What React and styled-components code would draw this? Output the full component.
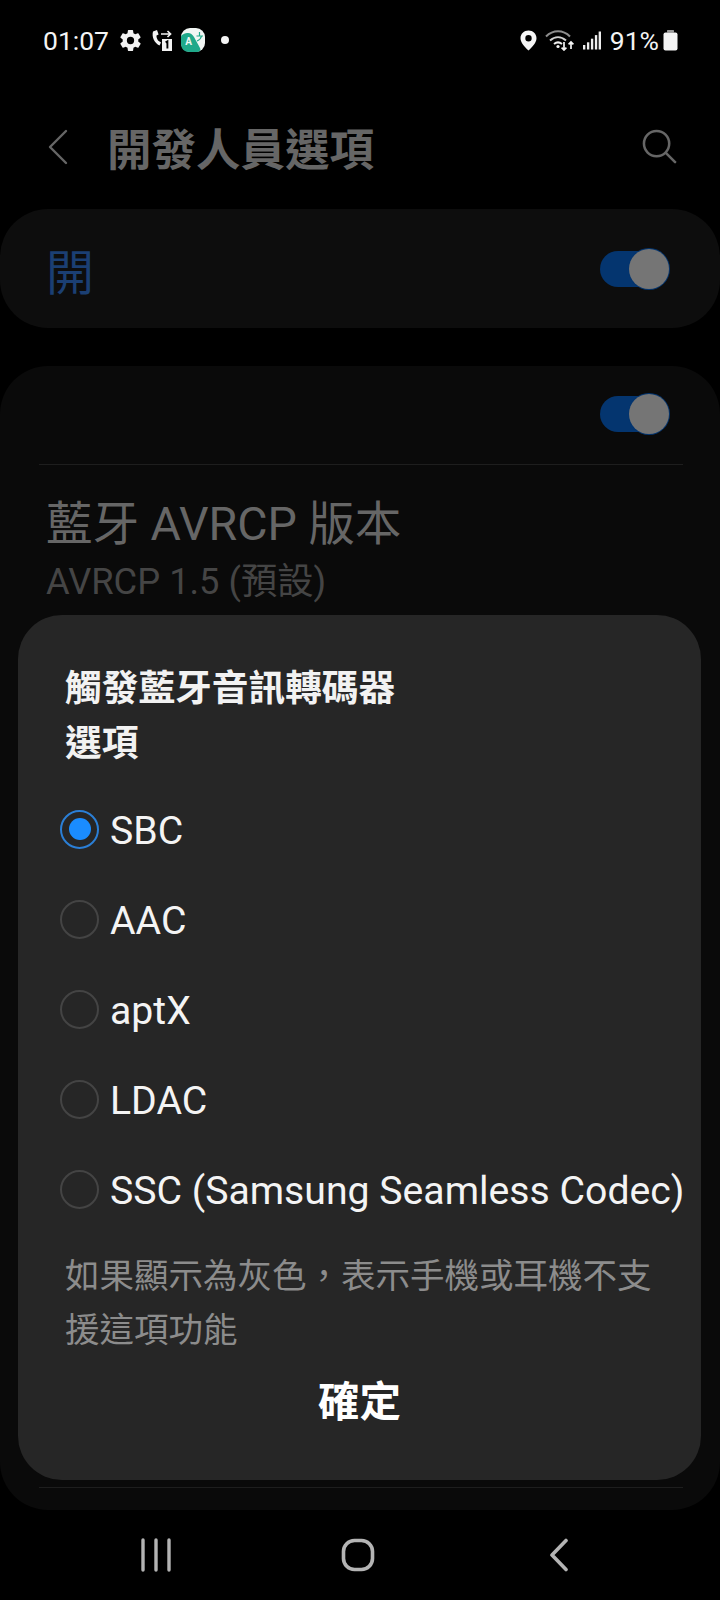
import React from 'react';
import styled, { createGlobalStyle } from 'styled-components';

const codecs = ['SBC', 'AAC', 'aptX', 'LDAC', 'SSC (Samsung Seamless Codec)'];
const helpText = '如果顯示為灰色\uFF0C表示手機或耳機不支援這項功能';

const App = () => {
    return (
        <>
            <GlobalStyle />
            <Page>
                <StatusBar>
                    <Time>01:07</Time>
                    <StatusIcons>
                        <GearIcon />
                        <CallIcon />
                        <AppIcon />
                        <Dot />
                    </StatusIcons>
                    <StatusRight>
                        <PinIcon />
                        <WifiIcon />
                        <SignalIcon />
                        <Battery>91%</Battery>
                        <BatteryIcon />
                    </StatusRight>
                </StatusBar>

                <TitleBar>
                    <IconSlot>
                        <svg width="20" height="36" viewBox="0 0 20 36" fill="none">
                            <path d="M18 2 L2 18 L18 34" stroke="#666" strokeWidth="2.4" strokeLinecap="round" strokeLinejoin="round" />
                        </svg>
                    </IconSlot>
                    <Title>開發人員選項</Title>
                    <svg width="35" height="35" viewBox="0 0 36 36" fill="none">
                        <circle cx="15" cy="15" r="13" stroke="#666" strokeWidth="2.6" />
                        <path d="M24.5 24.5 L34 34" stroke="#666" strokeWidth="2.6" strokeLinecap="round" />
                    </svg>
                </TitleBar>

                <MasterCard>
                    <MasterLabel>開</MasterLabel>
                    <Toggle />
                </MasterCard>

                <SettingsCard>
                    <ToggleRow>
                        <Toggle />
                    </ToggleRow>
                    <Divider />
                    <SettingRow>
                        <SettingName>藍牙 AVRCP 版本</SettingName>
                        <SettingValue>AVRCP 1.5 (預設)</SettingValue>
                    </SettingRow>
                    <BottomDivider />
                </SettingsCard>

                <NavBar>
                    <svg width="32" height="34" viewBox="0 0 32 34" fill="none">
                        <path d="M3 2 V32 M16 2 V32 M29 2 V32" stroke="#b4b4b4" strokeWidth="3.4" strokeLinecap="round" />
                    </svg>
                    <svg width="34" height="34" viewBox="0 0 34 34" fill="none">
                        <rect x="2.5" y="2.5" width="29" height="29" rx="11" stroke="#b4b4b4" strokeWidth="3.6" />
                    </svg>
                    <svg width="20" height="34" viewBox="0 0 20 34" fill="none">
                        <path d="M17 2.5 L3 17 L17 31.5" stroke="#b4b4b4" strokeWidth="3.6" strokeLinecap="round" strokeLinejoin="round" />
                    </svg>
                </NavBar>

                <Dialog>
                    <DialogTitle>觸發藍牙音訊轉碼器<br />選項</DialogTitle>
                    <Options>
                        {codecs.map((name, i) => (
                            <Option key={name}>
                                <Radio $checked={i === 0} />
                                <OptionLabel>{name}</OptionLabel>
                            </Option>
                        ))}
                    </Options>
                    <Help>{helpText}</Help>
                    <OkButton>確定</OkButton>
                </Dialog>
            </Page>
        </>
    );
};

export default App;

const GearIcon = () => (
    <svg width="25" height="25" viewBox="0 0 24 24" fill="#f2f2f2">
        <path d="M19.4 13c.05-.33.1-.66.1-1s-.05-.67-.1-1l2.1-1.65c.2-.15.25-.42.12-.64l-2-3.46c-.12-.22-.39-.3-.61-.22l-2.49 1c-.52-.4-1.08-.73-1.69-.98l-.38-2.65A.49.49 0 0 0 14 2h-4c-.25 0-.46.18-.49.42l-.38 2.65c-.61.25-1.17.59-1.69.98l-2.49-1c-.23-.09-.49 0-.61.22l-2 3.46c-.13.22-.07.49.12.64L4.57 11c-.05.33-.07.66-.07 1s.02.67.07 1l-2.11 1.65c-.19.15-.25.42-.12.64l2 3.46c.12.22.39.3.61.22l2.49-1c.52.4 1.08.73 1.69.98l.38 2.65c.03.24.24.42.49.42h4c.25 0 .46-.18.49-.42l.38-2.65c.61-.25 1.17-.59 1.69-.98l2.49 1c.23.09.49 0 .61-.22l2-3.46c.12-.22.07-.49-.12-.64L19.4 13zM12 15.5A3.5 3.5 0 1 1 12 8.5a3.5 3.5 0 0 1 0 7z" />
    </svg>
);

const CallIcon = () => (
    <svg width="22" height="24" viewBox="0 0 22 24" fill="none">
        <path d="M2 3.5 C0.5 9 3.5 15 8.5 17.5 L10 14.6 L7 12.4 C5.8 10.6 5.4 9.2 5.5 7.6 L7.6 6.6 L6 2 Z" fill="#f2f2f2" />
        <path d="M10 6 H19 M16.5 3 L19.6 6 L16.5 9" stroke="#f2f2f2" strokeWidth="1.6" />
        <path d="M11 11 H21 V23 H11 Z" fill="#f2f2f2" />
        <path d="M14.6 14.4 L16.4 13.4 V20.6" stroke="#000" strokeWidth="1.9" fill="none" />
    </svg>
);

const AppIcon = () => (
    <svg width="24" height="24" viewBox="0 0 24 24">
        <rect width="24" height="24" rx="9" fill="#f1f6f4" />
        <path d="M0 9 C0 7 3 5.5 6 5 C9 4.5 11 6 13 9 L19 20 C20 22 19 24 15 24 H9 C3 24 0 21 0 15 Z" fill="#1fa98a" />
        <path d="M15.5 8 H22 M18.5 4 V8 M20.5 8 C20 10.5 18.5 12 16 13" stroke="#1fa98a" strokeWidth="1.2" fill="none" />
        <text x="7.5" y="17" fontSize="10" fontWeight="700" fontFamily="Roboto, sans-serif" fill="#f1f6f4" textAnchor="middle">A</text>
    </svg>
);

const PinIcon = () => (
    <svg width="17" height="21" viewBox="0 0 17 21">
        <path fillRule="evenodd" fill="#f6f6f6" d="M8.5 0.5 C13 0.5 16.5 3.8 16.5 8.2 C16.5 12.6 12.2 17.2 8.5 20.5 C4.8 17.2 0.5 12.6 0.5 8.2 C0.5 3.8 4 0.5 8.5 0.5 Z M8.5 5 A3.2 3.2 0 1 0 8.5 11.4 A3.2 3.2 0 1 0 8.5 5 Z" />
    </svg>
);

const WifiIcon = () => (
    <svg width="30" height="22" viewBox="0 0 30 22" fill="none">
        <path d="M1 7.5 C8 0.5 18 0.5 25 7.5" stroke="#8d8d8d" strokeWidth="2" />
        <path d="M5 11.5 C10 7 16 7 21 11.5" stroke="#cfcfcf" strokeWidth="2" />
        <path d="M9 15 C11.5 13 14.5 13 17 15" stroke="#efefef" strokeWidth="2" />
        <circle cx="13" cy="17.5" r="1.6" fill="#f4f4f4" />
        <path d="M19 13 V21 M16.6 18.6 L19 21 L21.4 18.6" stroke="#f4f4f4" strokeWidth="1.7" />
        <path d="M26 20 V13 M23.6 15.4 L26 13 L28.4 15.4" stroke="#f4f4f4" strokeWidth="1.7" />
    </svg>
);

const SignalIcon = () => (
    <svg width="18" height="19" viewBox="0 0 20 20" fill="#ededed">
        <rect x="0" y="15" width="2.6" height="5" />
        <rect x="4.4" y="12" width="2.6" height="8" />
        <rect x="8.8" y="8" width="2.6" height="12" />
        <rect x="13.2" y="4" width="2.6" height="16" />
        <rect x="17.4" y="0" width="2.6" height="20" />
    </svg>
);

const BatteryIcon = () => (
    <svg width="15" height="21" viewBox="0 0 15 21" fill="#f4f4f4">
        <rect x="4" y="0" width="7" height="2.4" rx="0.6" fill="#9a9a9a" />
        <rect x="0.5" y="2.6" width="14" height="18" rx="2" />
    </svg>
);

const Toggle = () => (
    <ToggleTrack>
        <ToggleThumb />
    </ToggleTrack>
);

const GlobalStyle = createGlobalStyle`
    * {
        box-sizing: border-box;
    }

    html, body {
        margin: 0;
        padding: 0;
        background: #000;
    }
`;

const Page = styled.div`
    position: relative;
    width: 720px;
    height: 1600px;
    overflow: hidden;
    display: flex;
    flex-direction: column;
    background: #000;
    font-family: Roboto, "Noto Sans CJK TC", sans-serif;
`;

const StatusBar = styled.div`
    height: 80px;
    display: flex;
    align-items: center;
    padding: 0 42px 0 43px;
    color: #f4f4f4;
`;

const Time = styled.div`
    font-size: 26.5px;
`;

const StatusIcons = styled.div`
    display: flex;
    align-items: center;
    gap: 8px;
    margin-left: 9px;
    flex: 1;
`;

const Dot = styled.div`
    width: 8px;
    height: 8px;
    border-radius: 50%;
    background: #f4f4f4;
    margin-left: 8px;
`;

const StatusRight = styled.div`
    display: flex;
    align-items: center;
    gap: 8px;
`;

const Battery = styled.div`
    font-size: 26.5px;
    margin: 0 -4px 0 1px;
`;

const TitleBar = styled.div`
    height: 129px;
    flex-shrink: 0;
    display: flex;
    align-items: center;
    padding: 4px 43px 0 48px;
`;

const IconSlot = styled.div`
    width: 59px;
    display: flex;
    align-items: center;
`;

const Title = styled.div`
    flex: 1;
    font-size: 44.5px;
    font-weight: 700;
    color: #666;
`;

const MasterCard = styled.div`
    height: 119px;
    flex-shrink: 0;
    display: flex;
    align-items: center;
    justify-content: space-between;
    padding: 0 51px 0 46px;
    margin-bottom: 38px;
    border-radius: 48px;
    background: #0d0d0d;
`;

const MasterLabel = styled.div`
    font-size: 48px;
    color: #1b3f73;
`;

const ToggleTrack = styled.div`
    position: relative;
    width: 69px;
    height: 36px;
    border-radius: 18px;
    background: #04356f;
`;

const ToggleThumb = styled.div`
    position: absolute;
    top: -2px;
    right: 0;
    width: 40px;
    height: 40px;
    border-radius: 50%;
    background: #757575;
    box-shadow: 0 0 0 1px #04356f;
`;

const SettingsCard = styled.div`
    flex: 1;
    display: flex;
    flex-direction: column;
    border-radius: 48px;
    background: #0a0a0a;
`;

const ToggleRow = styled.div`
    height: 98px;
    display: flex;
    justify-content: flex-end;
    align-items: center;
    padding: 0 51px 2px 0;
`;

const Divider = styled.div`
    height: 1px;
    flex-shrink: 0;
    margin: 0 37px 0 39px;
    background: #1e1e1e;
`;

const SettingRow = styled.div`
    padding: 30px 46px 0;
`;

const SettingName = styled.div`
    font-size: 46.5px;
    line-height: 58px;
    color: #666;
`;

const SettingValue = styled.div`
    font-size: 36.3px;
    line-height: 50px;
    margin-top: 4px;
    color: #454545;
`;

const BottomDivider = styled(Divider)`
    margin-top: auto;
    margin-bottom: 22px;
`;

const NavBar = styled.div`
    height: 90px;
    flex-shrink: 0;
    display: flex;
    align-items: flex-start;
    padding: 28px 151px 0 140px;
    justify-content: space-between;

    svg:nth-child(2) {
        margin-left: -6px;
    }
`;

const Dialog = styled.div`
    position: absolute;
    top: 615px;
    left: 18px;
    width: 683px;
    height: 865px;
    padding: 46px 47px 0;
    border-radius: 44px;
    background: #262626;
    display: flex;
    flex-direction: column;
`;

const DialogTitle = styled.div`
    font-size: 36.7px;
    line-height: 55px;
    font-weight: 700;
    color: #f2f2f2;
`;

const Options = styled.div`
    margin: 15px -30px 13px -5px;
    display: flex;
    flex-direction: column;
`;

const Option = styled.div`
    height: 90px;
    display: flex;
    align-items: center;
    gap: 11px;
`;

const Radio = styled.div`
    position: relative;
    flex-shrink: 0;
    width: 39px;
    height: 39px;
    border-radius: 50%;
    border: 2px solid ${(props) => (props.$checked ? '#2b7fd6' : '#444')};
    margin-top: -4px;

    &::after {
        content: '';
        display: ${(props) => (props.$checked ? 'block' : 'none')};
        position: absolute;
        top: 6.5px;
        left: 6.5px;
        width: 22px;
        height: 22px;
        border-radius: 50%;
        background: #1a8cff;
    }
`;

const OptionLabel = styled.div`
    font-size: 39.2px;
    color: #f4f4f4;
    white-space: nowrap;
`;

const Help = styled.div`
    font-size: 34.5px;
    line-height: 54px;
    color: #8c8c8c;
`;

const OkButton = styled.div`
    height: 60px;
    margin-top: 12px;
    display: flex;
    align-items: center;
    justify-content: center;
    font-size: 41.5px;
    font-weight: 700;
    color: #fff;
`;
